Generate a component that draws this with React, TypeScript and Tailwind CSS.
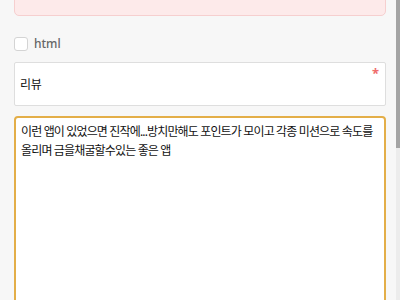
import React from "react";

export default function App() {
  const font = { fontFamily: '"Noto Sans", "Noto Sans CJK KR", sans-serif' };
  return (
    <div
      className="relative w-[400px] h-[300px] overflow-hidden bg-[#f7f7f7]"
      style={font}
    >
      <div className="flex flex-col px-[14px]">
        <div className="mt-[-44px] h-[60px] rounded-[5px] border border-[#f6cfcf] bg-[#fdeaea]" />
        <div className="mt-[21px] flex items-center gap-[6px] h-[14px]">
          <div className="w-[14px] h-[14px] rounded-[3px] border border-[#d4d4d4] bg-white" />
          <span className="text-[12px] font-medium text-[#666] leading-none">html</span>
        </div>
        <div className="relative mt-[11px] h-[44px] border border-[#dedede] bg-white rounded-[2px] flex items-center px-[5px]">
          <span className="text-[12px] text-[#111] tracking-[-0.4px] pt-[1px]">리뷰</span>
          <span className="absolute right-[6px] top-[4px] text-[13px] font-bold leading-none text-[#ef6b6b]">*</span>
        </div>
        <div className="mt-[10px] h-[200px] border-2 border-[#e3ae48] rounded-[4px] bg-white px-[5px] pt-[4px]">
          <p className="text-[12px] leading-[19px] text-[#111] tracking-[-0.85px]">
            이런 앱이 있었으면 진작에...방치만해도 포인트가 모이고 각종 미션으로 속도를 올리며 금을채굴할수있는 좋은 앱
          </p>
        </div>
      </div>
      <div className="absolute right-0 top-0 w-[4px] h-full bg-[#ececec]">
        <div className="w-full h-[148px] bg-[#a4a4a4]" />
      </div>
    </div>
  );
}
